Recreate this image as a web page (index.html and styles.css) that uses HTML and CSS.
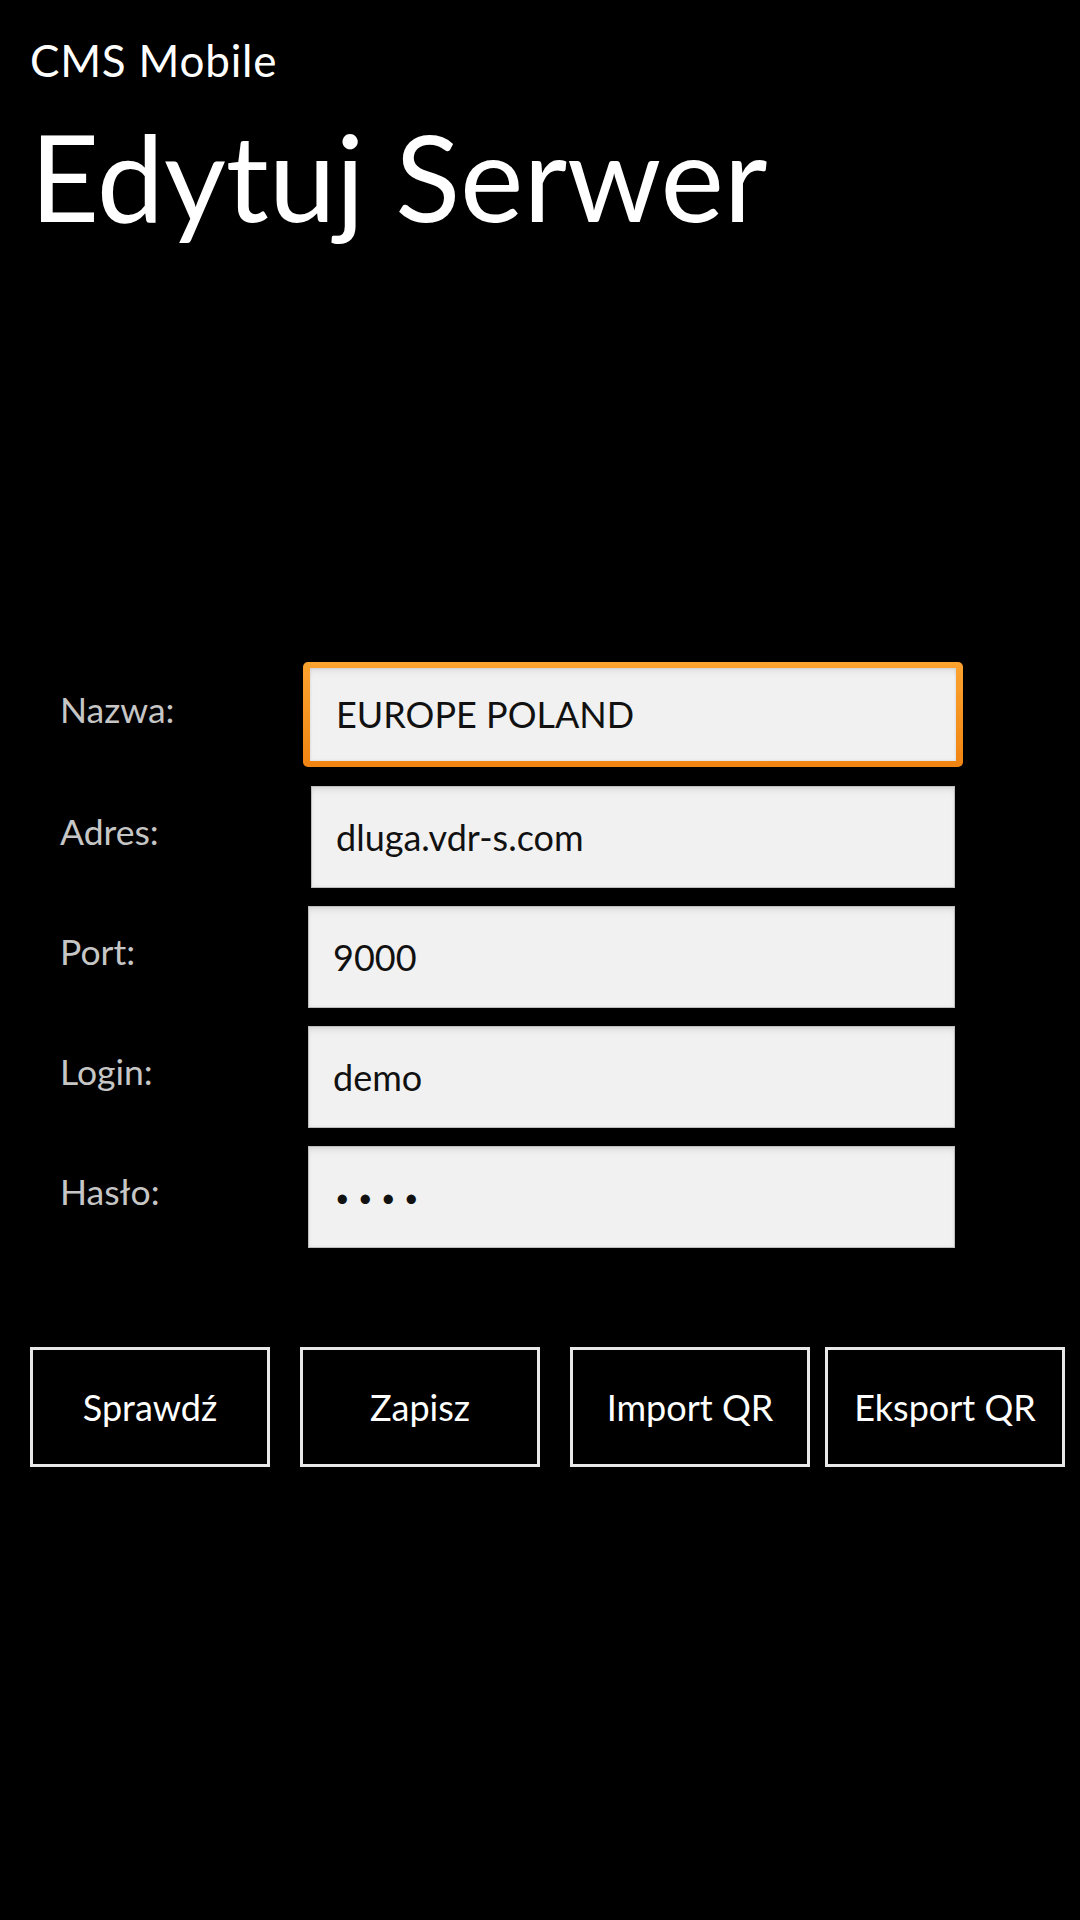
FILE: index.html
```html
<!DOCTYPE html>
<html lang="pl">
<head>
<meta charset="utf-8">
<title>CMS Mobile - Edytuj Serwer</title>
<link rel="stylesheet" href="styles.css">
</head>
<body>
<div class="app">
  <header class="header">
    <div class="app-name">CMS Mobile</div>
    <h1 class="page-title">Edytuj Serwer</h1>
  </header>

  <form class="form">
    <div class="row row-first">
      <label class="label" for="f-name">Nazwa:</label>
      <input class="field field-focused" id="f-name" type="text" value="EUROPE POLAND">
    </div>
    <div class="row">
      <label class="label" for="f-addr">Adres:</label>
      <input class="field field-addr" id="f-addr" type="text" value="dluga.vdr-s.com">
    </div>
    <div class="row">
      <label class="label" for="f-port">Port:</label>
      <input class="field" id="f-port" type="text" value="9000">
    </div>
    <div class="row">
      <label class="label" for="f-login">Login:</label>
      <input class="field" id="f-login" type="text" value="demo">
    </div>
    <div class="row">
      <label class="label" for="f-pass">Hasło:</label>
      <input class="field field-pass" id="f-pass" type="password" value="demo">
    </div>
  </form>

  <div class="actions">
    <button class="btn" type="button">Sprawdź</button>
    <button class="btn" type="button">Zapisz</button>
    <button class="btn" type="button">Import QR</button>
    <button class="btn btn-last" type="button">Eksport QR</button>
  </div>
</div>
</body>
</html>
```

FILE: styles.css
```css
html, body {
  margin: 0;
  padding: 0;
  background: #000;
}

body {
  width: 1080px;
  height: 1920px;
  overflow: hidden;
  font-family: Lato, "Open Sans", "Liberation Sans", sans-serif;
  color: #fff;
}

.app {
  padding: 34px 0 0 30px;
}

.header {
  display: flex;
  flex-direction: column;
}

.app-name {
  font-size: 44px;
  line-height: 1.2;
  letter-spacing: 0.8px;
  padding-left: 0;
}

.page-title {
  margin: 17px 0 0 0;
  font-size: 120px;
  font-weight: 400;
  line-height: 1.2;
  padding-left: 0;
}

.form {
  margin-top: 414px;
  display: flex;
  flex-direction: column;
  gap: 18px;
}

.row {
  display: flex;
  align-items: center;
  height: 102px;
}

.row-first {
  height: 105px;
  margin-bottom: 1px;
}

.label {
  width: 278px;
  padding-left: 30px;
  box-sizing: border-box;
  font-size: 35.5px;
  line-height: 1.2;
  color: #c6c6c6;
  padding-bottom: 9px;
}

.field {
  box-sizing: border-box;
  width: 647px;
  height: 102px;
  margin: 0;
  padding: 0 0 0 24px;
  border: 1px solid #bdbdbd;
  border-radius: 0;
  background: #f1f1f1;
  box-shadow: inset 0 8px 8px -6px rgba(0, 0, 0, 0.10), inset 0 0 4px rgba(0, 0, 0, 0.05);
  font-family: Lato, "Open Sans", "Liberation Sans", sans-serif;
  font-size: 36px;
  color: #111;
  outline: none;
}

.field-addr {
  margin-left: 3px;
  width: 644px;
}

.field-focused {
  margin-left: -5px;
  width: 660px;
  height: 105px;
  padding-left: 26px;
  border: 7px solid transparent;
  border-top-width: 6px;
  border-bottom-width: 6px;
  border-radius: 5px;
  background:
    linear-gradient(#f1f1f1, #f1f1f1) padding-box,
    linear-gradient(#fba32f, #f08412) border-box;
  box-shadow: inset 0 8px 8px -6px rgba(0, 0, 0, 0.10), inset 0 0 3px rgba(0, 0, 0, 0.12);
}

.field-pass {
  font-size: 25px;
  letter-spacing: 8.5px;
  padding-left: 26px;
}

.actions {
  margin-top: 99px;
  display: flex;
  gap: 30px;
}

.btn {
  box-sizing: border-box;
  width: 240px;
  height: 120px;
  margin: 0;
  padding: 0;
  background: #000;
  border: 3px solid #e8e8e8;
  border-radius: 0;
  color: #fff;
  font-family: Lato, "Open Sans", "Liberation Sans", sans-serif;
  font-size: 36px;
  cursor: pointer;
}

.btn-last {
  margin-left: -15px;
}
```
